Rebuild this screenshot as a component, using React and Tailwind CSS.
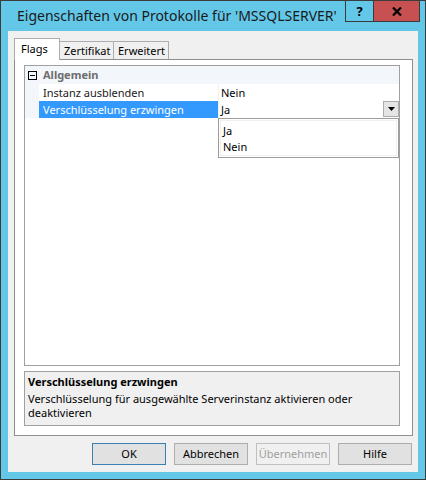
export default function App() {
  const font = { fontFamily: '"Noto Sans", "Open Sans", sans-serif' };
  return (
    <div
      className="w-[426px] h-[480px] border border-[#3c3c3c] bg-[#63c7e8] flex flex-col text-[11px] text-black"
      style={font}
    >
      {/* Title bar */}
      <div className="h-[30px] flex items-start">
        <div className="pl-[16px] pt-[5px] text-[14px] leading-[20px] text-[#1a1a1a] whitespace-nowrap">
          Eigenschaften von Protokolle für 'MSSQLSERVER'
        </div>
        <div className="ml-auto mr-[5px] flex">
          <div className="w-[29px] h-[21px] border border-t-0 border-[#3a3a3a] flex items-center justify-center font-bold text-[13px] leading-none">
            ?
          </div>
          <div className="w-[46px] h-[21px] bg-[#c75050] border border-t-0 border-l-0 border-[#3a3a3a] flex items-center justify-center">
            <svg width="10" height="9" viewBox="0 0 10 9">
              <path d="M1 0.5 L9 8.5 M9 0.5 L1 8.5" stroke="#000" strokeWidth="2.2" />
            </svg>
          </div>
        </div>
      </div>

      {/* Client */}
      <div className="mx-[7px] h-[441px] bg-[#f0f0f0] flex flex-col pt-[7px] pl-[6px] pr-[5px]">
        {/* Tabs */}
        <div className="flex items-end h-[21px] relative z-10">
          <div className="w-[46px] h-[22px] -mb-px bg-white border border-b-0 border-[#adadad] pl-[6px] pt-[2px]">
            Flags
          </div>
          <div className="w-[54px] h-[18px] bg-[#f0f0f0] border border-l-0 border-b-0 border-[#adadad] pl-[4px] leading-[18px]">
            Zertifikat
          </div>
          <div className="w-[55px] h-[18px] bg-[#f0f0f0] border border-l-0 border-b-0 border-[#adadad] pl-[4px] leading-[18px]">
            Erweitert
          </div>
        </div>
        {/* Panel */}
        <div className="h-[377px] bg-white border border-[#8e8f8f] flex flex-col pl-[9px] pr-[12px] pt-[5px] pb-[9px]">
          {/* Property grid */}
          <div className="h-[301px] border border-[#a0a0a0] flex flex-col relative">
            <div className="h-[18px] bg-[#f3f6fb] flex items-center">
              <div className="w-[14px] flex justify-center">
                <div className="w-[9px] h-[9px] border border-black flex items-center justify-center">
                  <div className="w-[5px] h-px bg-black"></div>
                </div>
              </div>
              <div className="pl-[4px] font-bold text-[#6d6d6d]">Allgemein</div>
            </div>
            <div className="h-[17px] flex">
              <div className="w-[14px] bg-[#f3f6fb]"></div>
              <div className="w-[179px] pl-[4px] leading-[17px] text-[#1a1a1a]">Instanz ausblenden</div>
              <div className="w-px bg-[#f0f0f0]"></div>
              <div className="flex-1 pl-[2px] leading-[17px]">Nein</div>
            </div>
            <div className="h-[17px] flex">
              <div className="w-[14px] bg-[#f3f6fb]"></div>
              <div className="w-[179px] pl-[4px] leading-[17px] bg-[#3399ff] text-white">Verschlüsselung erzwingen</div>
              <div className="w-px bg-[#f0f0f0]"></div>
              <div className="flex-1 flex">
                <div className="flex-1 pl-[2px] leading-[17px]">Ja</div>
                <div className="w-[16px] h-[16px] bg-[#e5e5e5] border border-[#acacac] flex items-center justify-center">
                  <svg width="7" height="4" viewBox="0 0 7 4">
                    <path d="M0 0 H7 L3.5 4 Z" fill="#000" />
                  </svg>
                </div>
              </div>
            </div>
            {/* Dropdown list */}
            <div className="absolute left-[193px] top-[52px] w-[181px] h-[40px] bg-white border border-[#9c9c9c] p-px">
              <div className="h-full border border-[#f0f0f0] pt-[2px]">
                <div className="h-[16px] leading-[16px] pl-[2px]">Ja</div>
                <div className="h-[16px] leading-[16px] pl-[2px]">Nein</div>
              </div>
            </div>
          </div>
          {/* Description */}
          <div className="mt-[5px] h-[55px] bg-[#f0f0f0] border border-[#a0a0a0] px-[3px] pt-[2px]">
            <div className="font-bold leading-[16px]">Verschlüsselung erzwingen</div>
            <div className="leading-[14px] pt-[2px]">
              Verschlüsselung für ausgewählte Serverinstanz aktivieren oder deaktivieren
            </div>
          </div>
        </div>
        {/* Buttons */}
        <div className="flex justify-end gap-[8px] pt-[7px] pr-[1px]">
          <button className="w-[74px] h-[22px] bg-[#e1e1e1] border border-[#3c7fb1]">OK</button>
          <button className="w-[74px] h-[22px] bg-[#e1e1e1] border border-[#adadad]">Abbrechen</button>
          <button className="w-[74px] h-[22px] bg-[#f0f0f0] border border-[#bfbfbf] text-[#a0a0a0]">Übernehmen</button>
          <button className="w-[74px] h-[22px] bg-[#e1e1e1] border border-[#adadad]">Hilfe</button>
        </div>
      </div>
    </div>
  );
}
